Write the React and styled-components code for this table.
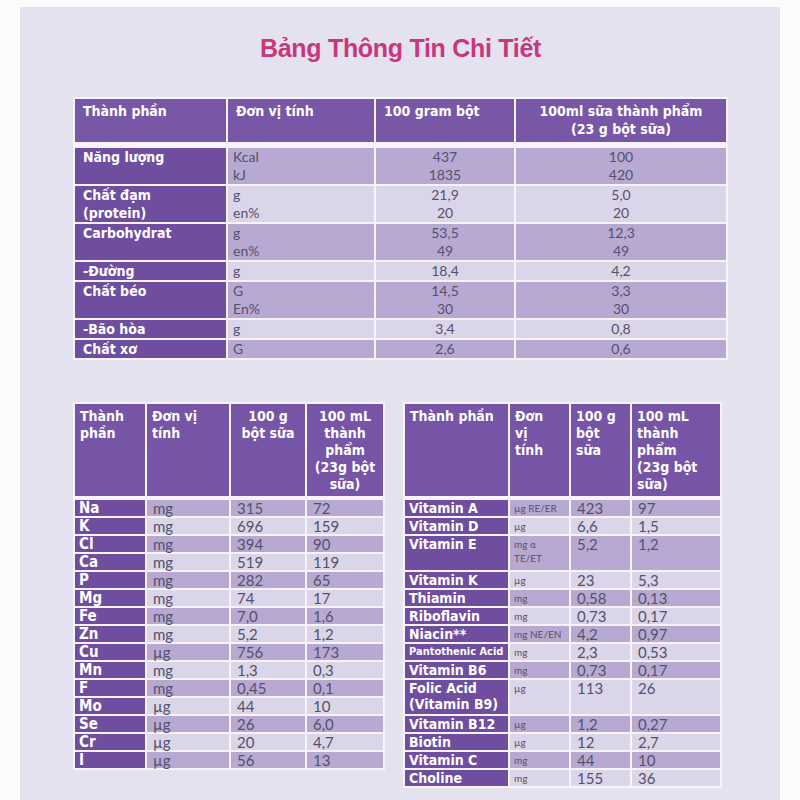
import React from 'react';
import styled, { createGlobalStyle } from 'styled-components';

const GlobalStyle = createGlobalStyle`
  html, body {
    margin: 0;
    padding: 0;
    background: #fbfbfd;
  }
`;

const topRows = [
  { label: 'Năng lượng', units: 'Kcal\nkJ', a: '437\n1835', b: '100\n420' },
  { label: 'Chất đạm\n(protein)', units: 'g\nen%', a: '21,9\n20', b: '5,0\n20' },
  { label: 'Carbohydrat', units: 'g\nen%', a: '53,5\n49', b: '12,3\n49' },
  { label: '-Đường', units: 'g', a: '18,4', b: '4,2' },
  { label: 'Chất béo', units: 'G\nEn%', a: '14,5\n30', b: '3,3\n30' },
  { label: '-Bão hòa', units: 'g', a: '3,4', b: '0,8' },
  { label: 'Chất xơ', units: 'G', a: '2,6', b: '0,6' },
];

const minerals = [
  ['Na', 'mg', '315', '72'],
  ['K', 'mg', '696', '159'],
  ['Cl', 'mg', '394', '90'],
  ['Ca', 'mg', '519', '119'],
  ['P', 'mg', '282', '65'],
  ['Mg', 'mg', '74', '17'],
  ['Fe', 'mg', '7,0', '1,6'],
  ['Zn', 'mg', '5,2', '1,2'],
  ['Cu', 'µg', '756', '173'],
  ['Mn', 'mg', '1,3', '0,3'],
  ['F', 'mg', '0,45', '0,1'],
  ['Mo', 'µg', '44', '10'],
  ['Se', 'µg', '26', '6,0'],
  ['Cr', 'µg', '20', '4,7'],
  ['I', 'µg', '56', '13'],
];

const vitamins = [
  ['Vitamin A', 'µg RE/ER', '423', '97'],
  ['Vitamin D', 'µg', '6,6', '1,5'],
  ['Vitamin E', 'mg α\nTE/ET', '5,2', '1,2', true],
  ['Vitamin K', 'µg', '23', '5,3'],
  ['Thiamin', 'mg', '0,58', '0,13'],
  ['Riboflavin', 'mg', '0,73', '0,17'],
  ['Niacin**', 'mg NE/EN', '4,2', '0,97'],
  ['Pantothenic Acid', 'mg', '2,3', '0,53'],
  ['Vitamin B6', 'mg', '0,73', '0,17'],
  ['Folic Acid\n(Vitamin B9)', 'µg', '113', '26', true],
  ['Vitamin B12', 'µg', '1,2', '0,27'],
  ['Biotin', 'µg', '12', '2,7'],
  ['Vitamin C', 'mg', '44', '10'],
  ['Choline', 'mg', '155', '36'],
];

export default function App() {
  return (
    <>
      <GlobalStyle />
      <Panel>
        <Title>Bảng Thông Tin Chi Tiết</Title>

        <Table $w={655}>
          <colgroup>
            <col style={{ width: 151 }} />
            <col style={{ width: 146 }} />
            <col style={{ width: 138 }} />
            <col />
          </colgroup>
          <thead>
            <tr>
              <TopHead>Thành phần</TopHead>
              <TopHead>Đơn vị tính</TopHead>
              <TopHead>100 gram bột</TopHead>
              <TopHead $align="center">{'100ml sữa thành phẩm\n(23 g bột sữa)'}</TopHead>
            </tr>
          </thead>
          <tbody>
            {topRows.map((r, i) => (
              <tr key={r.label}>
                <TopLabel>{r.label}</TopLabel>
                <TopData $dark={i % 2 === 0}>{r.units}</TopData>
                <TopData $dark={i % 2 === 0} $align="center">{r.a}</TopData>
                <TopData $dark={i % 2 === 0} $align="center">{r.b}</TopData>
              </tr>
            ))}
          </tbody>
        </Table>

        <Bottom>
          <Table $w={312}>
            <colgroup>
              <col style={{ width: 70 }} />
              <col style={{ width: 82 }} />
              <col style={{ width: 74 }} />
              <col />
            </colgroup>
            <thead>
              <tr>
                <SmallHead>{'Thành\nphần'}</SmallHead>
                <SmallHead>{'Đơn vị\ntính'}</SmallHead>
                <SmallHead $align="center">{'100 g\nbột sữa'}</SmallHead>
                <SmallHead $align="center">{'100 mL\nthành\nphẩm\n(23g bột\nsữa)'}</SmallHead>
              </tr>
            </thead>
            <tbody>
              {minerals.map((r, i) => (
                <tr key={r[0]}>
                  <SmallLabel $fs={15}>{r[0]}</SmallLabel>
                  <SmallData $dark={i % 2 === 0}>{r[1]}</SmallData>
                  <SmallData $dark={i % 2 === 0}>{r[2]}</SmallData>
                  <SmallData $dark={i % 2 === 0}>{r[3]}</SmallData>
                </tr>
              ))}
            </tbody>
          </Table>

          <Table $w={319}>
            <colgroup>
              <col style={{ width: 103 }} />
              <col style={{ width: 59 }} />
              <col style={{ width: 59 }} />
              <col />
            </colgroup>
            <thead>
              <tr>
                <SmallHead>Thành phần</SmallHead>
                <SmallHead>{'Đơn\nvị\ntính'}</SmallHead>
                <SmallHead>{'100 g\nbột\nsữa'}</SmallHead>
                <SmallHead>{'100 mL\nthành\nphẩm\n(23g bột\nsữa)'}</SmallHead>
              </tr>
            </thead>
            <tbody>
              {vitamins.map((r, i) => (
                <tr key={r[0]}>
                  <SmallLabel $fs={r[0] === 'Pantothenic Acid' ? 11 : 14} $tall={r[4]}>{r[0]}</SmallLabel>
                  <SmallData $dark={i % 2 === 0} $unit>{r[1]}</SmallData>
                  <SmallData $dark={i % 2 === 0}>{r[2]}</SmallData>
                  <SmallData $dark={i % 2 === 0}>{r[3]}</SmallData>
                </tr>
              ))}
            </tbody>
          </Table>
        </Bottom>
      </Panel>
    </>
  );
}

const Panel = styled.div`
  margin: 7px 0 0 20px;
  width: 760px;
  height: 793px;
  background: #e4e2ee;
  display: flex;
  flex-direction: column;
  padding: 0 0 0 53px;
  box-sizing: border-box;
`;

const Title = styled.h1`
  margin: 26px 0 32px;
  width: 655px;
  height: 32px;
  text-align: center;
  color: #c8367f;
  font-family: "Liberation Sans Narrow", "Liberation Sans", Arial, sans-serif;
  font-weight: 700;
  font-size: 25px;
  line-height: 30px;
  letter-spacing: -0.3px;
`;

const Table = styled.table`
  width: ${p => p.$w}px;
  table-layout: fixed;
  border-collapse: separate;
  border-spacing: 2px;
  background: #f6f4fa;
  white-space: pre-line;
`;

const Bottom = styled.div`
  display: flex;
  gap: 18px;
  margin-top: 42px;
  align-items: flex-start;
`;

const TopHead = styled.th`
  background: #7857a7;
  color: #fff;
  font-family: "DejaVu Sans Condensed", "DejaVu Sans", Verdana, sans-serif;
  font-weight: 700;
  font-size: 14px;
  line-height: 18px;
  height: 47px;
  padding: 3px 8px 0;
  box-sizing: border-box;
  text-align: ${p => p.$align || 'left'};
  vertical-align: top;
  border-bottom: 4px solid #f6f4fa;
`;

const TopLabel = styled.td`
  background: #6f4e9f;
  color: #fff;
  font-family: "DejaVu Sans Condensed", "DejaVu Sans", Verdana, sans-serif;
  font-weight: 700;
  font-size: 14px;
  line-height: 18px;
  padding: 0 8px;
  vertical-align: top;
`;

const TopData = styled.td`
  background: ${p => (p.$dark ? '#b8a9d3' : '#dbd5e9')};
  color: #55516a;
  font-family: Lato, "Open Sans", sans-serif;
  font-size: 14px;
  line-height: 18px;
  padding: 0 ${p => (p.$align === 'center' ? 0 : 5)}px;
  text-align: ${p => p.$align || 'left'};
  vertical-align: top;
`;

const SmallHead = styled.th`
  background: #7755a6;
  color: #fff;
  font-family: "DejaVu Sans Condensed", "DejaVu Sans", Verdana, sans-serif;
  font-weight: 700;
  font-size: 14px;
  line-height: 17px;
  height: 94px;
  padding: 4px 5px 0;
  box-sizing: border-box;
  text-align: ${p => p.$align || 'left'};
  vertical-align: top;
  border-bottom: 2px solid #f6f4fa;
`;

const SmallLabel = styled.td`
  background: #6f4e9f;
  color: #fff;
  font-family: "DejaVu Sans Condensed", "DejaVu Sans", Verdana, sans-serif;
  font-weight: 700;
  font-size: ${p => p.$fs}px;
  line-height: 16px;
  height: ${p => (p.$tall ? 34 : 16)}px;
  padding: 0 4px;
  vertical-align: top;
  white-space: pre;
  overflow: hidden;
`;

const SmallData = styled.td`
  background: ${p => (p.$dark ? '#b8a9d3' : '#dbd5e9')};
  color: #55516a;
  font-family: Lato, "Open Sans", sans-serif;
  font-size: ${p => (p.$unit ? 10 : 15)}px;
  line-height: ${p => (p.$unit ? 14 : 16)}px;
  padding: ${p => (p.$unit ? '1px 4px 0' : '0 6px')};
  vertical-align: top;
  white-space: ${p => (p.$unit ? 'pre-line' : 'nowrap')};
`;
